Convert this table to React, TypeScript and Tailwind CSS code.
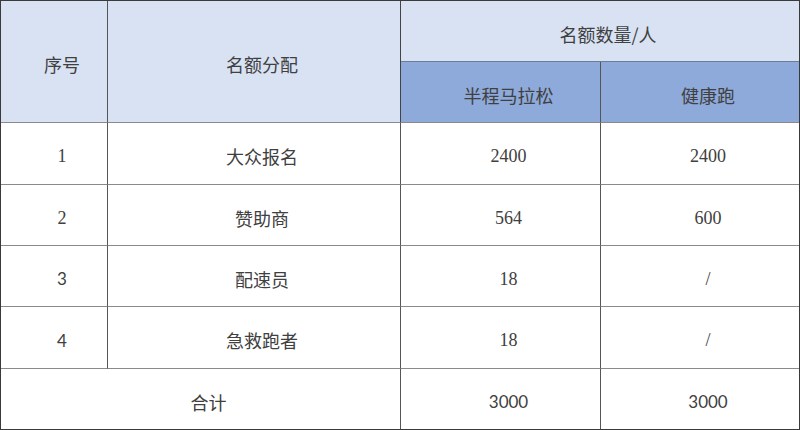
const zh = "font-['Noto_Sans_CJK_SC',sans-serif] text-[18px]";
const num = "font-['Liberation_Serif',serif] text-[18px]";
const numSans = "font-['Lato',sans-serif] text-[17px]";

const rows = [
  { no: "1", name: "大众报名", half: "2400", fun: "2400", noSans: false },
  { no: "2", name: "赞助商", half: "564", fun: "600", noSans: false },
  { no: "3", name: "配速员", half: "18", fun: "/", noSans: true },
  { no: "4", name: "急救跑者", half: "18", fun: "/", noSans: true },
];

function Cell({ className = "", children }: { className?: string; children?: React.ReactNode }) {
  return (
    <div className={`flex items-center justify-center pl-4 pt-[6px] text-[#404040] ${className}`}>
      {children}
    </div>
  );
}

export default function App() {
  return (
    <div className="w-[800px] h-[430px] bg-white">
      <div className="grid h-full w-full grid-cols-[107px_293px_200px_198px] grid-rows-[61px_61px_62px_61px_61px_62px_60px] border border-[#3a3a3a]">
        <Cell className={`row-span-2 border-r border-r-[#555] border-b border-b-[#8a8a8a] bg-[#d9e2f3] ${zh}`}>序号</Cell>
        <Cell className={`row-span-2 border-r border-r-[#444] border-b border-b-[#8a8a8a] bg-[#d9e2f3] ${zh}`}>名额分配</Cell>
        <Cell className={`col-span-2 border-b border-b-[#6e7c9c] bg-[#d9e2f3] ${zh}`}>名额数量/人</Cell>
        <Cell className={`border-r border-r-[#555] border-b border-b-[#8a8a8a] bg-[#8eaadb] ${zh}`}>半程马拉松</Cell>
        <Cell className={`border-b border-b-[#8a8a8a] bg-[#8eaadb] ${zh}`}>健康跑</Cell>

        {rows.map((r) => (
          <div key={r.no} className="contents">
            <Cell className={`border-r border-r-[#555] border-b border-b-[#8a8a8a] ${r.noSans ? numSans : num}`}>{r.no}</Cell>
            <Cell className={`border-r border-r-[#555] border-b border-b-[#8a8a8a] ${zh}`}>{r.name}</Cell>
            <Cell className={`border-r border-r-[#555] border-b border-b-[#8a8a8a] ${num}`}>{r.half}</Cell>
            <Cell className={`border-b border-b-[#8a8a8a] ${num}`}>{r.fun}</Cell>
          </div>
        ))}

        <Cell className={`col-span-2 border-r border-r-[#555] ${zh}`}>合计</Cell>
        <Cell className={`border-r border-r-[#555] ${numSans}`}>3000</Cell>
        <Cell className={numSans}>3000</Cell>
      </div>
    </div>
  );
}
